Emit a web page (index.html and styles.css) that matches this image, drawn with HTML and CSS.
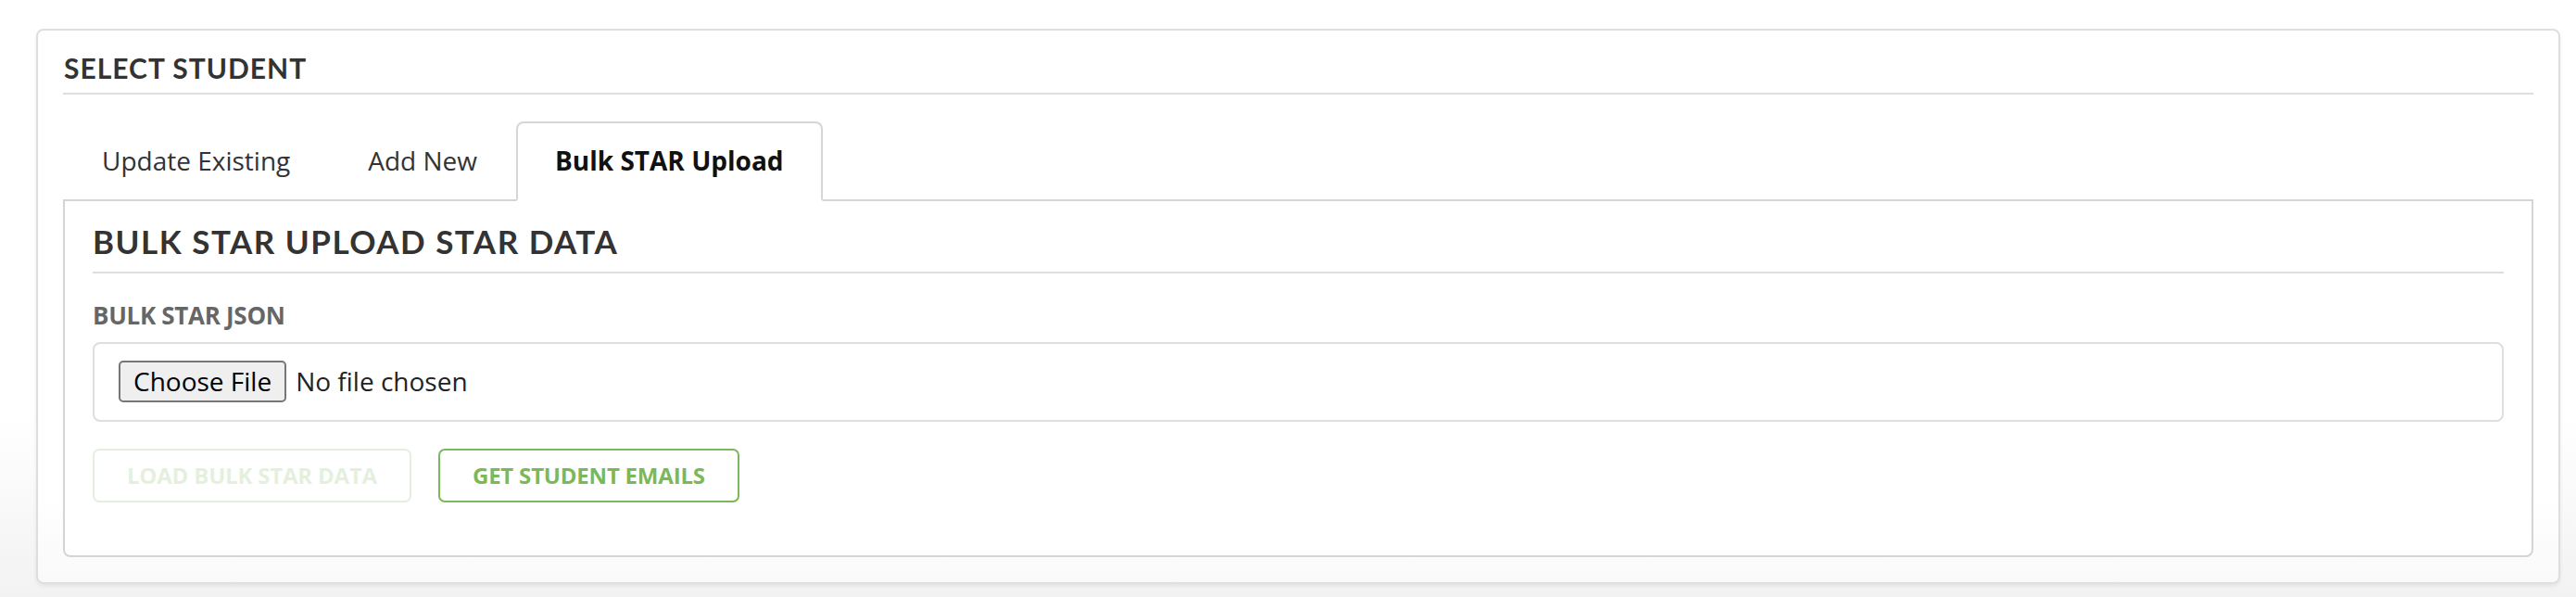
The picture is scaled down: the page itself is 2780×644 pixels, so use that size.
FILE: index.html
```html
<!DOCTYPE html>
<html lang="en">
<head>
<meta charset="utf-8">
<title>Select Student</title>
<link rel="stylesheet" href="styles.css">
</head>
<body>
<section class="card">
  <h2 class="card-title">SELECT STUDENT</h2>
  <nav class="tabs">
    <a class="tab">Update Existing</a>
    <a class="tab">Add New</a>
    <a class="tab tab-active">Bulk STAR Upload</a>
  </nav>
  <div class="panel">
    <h3 class="panel-title">BULK STAR UPLOAD STAR DATA</h3>
    <div class="field-label">BULK STAR JSON</div>
    <div class="file-box">
      <button class="file-btn" type="button">Choose File</button>
      <span class="file-name">No file chosen</span>
    </div>
    <div class="actions">
      <button class="btn btn-disabled" type="button">LOAD BULK STAR DATA</button>
      <button class="btn" type="button">GET STUDENT EMAILS</button>
    </div>
  </div>
</section>
</body>
</html>
```

FILE: styles.css
```css
html, body {
  margin: 0;
  height: 100%;
}
body {
  box-sizing: border-box;
  padding: 31px 17px 0 39px;
  min-height: 644px;
  background: linear-gradient(to bottom, #ffffff 0%, #ffffff 70%, #f2f2f2 100%);
  font-family: "Open Sans", "Liberation Sans", sans-serif;
  color: #333;
}
.card {
  border: 2px solid #dedede;
  border-radius: 8px;
  padding: 20px 27px 27px;
  background: linear-gradient(to bottom, #ffffff 0%, #ffffff 85%, #f9f9f9 100%);
  box-shadow: 0 2px 4px rgba(0, 0, 0, 0.07);
}
.card-title {
  margin: 0;
  font-family: Lato, "Open Sans", sans-serif;
  font-weight: 700;
  font-size: 30px;
  letter-spacing: 1px;
  line-height: 40px;
  color: #333;
  padding: 0 0 7px 1px;
  border-bottom: 2px solid #dedede;
}
.tabs {
  display: flex;
  gap: 0;
  margin-top: 29px;
  margin-bottom: -2px;
  position: relative;
  z-index: 1;
}
.tab {
  display: block;
  padding: 20px 40px 22px;
  border: 2px solid transparent;
  border-radius: 8px 8px 0 0;
  font-size: 28px;
  line-height: 40px;
  color: #333;
}
.tab-active {
  background: #fff;
  border-color: #d6d6d6;
  border-bottom-color: #fff;
  font-weight: 700;
  color: #111;
}
.panel {
  border: 2px solid #d4d4d4;
  border-radius: 0 0 8px 8px;
  padding: 21px 30px 57px;
  background: #fff;
}
.panel-title {
  margin: 0;
  font-family: Lato, "Open Sans", sans-serif;
  font-weight: 700;
  font-size: 35px;
  letter-spacing: 1.5px;
  line-height: 44px;
  color: #333;
  padding-bottom: 11px;
  border-bottom: 2px solid #dedede;
}
.field-label {
  margin-top: 27px;
  font-weight: 700;
  font-size: 26px;
  line-height: 36px;
  color: #666;
  letter-spacing: -0.3px;
}
.file-box {
  margin-top: 11px;
  box-sizing: border-box;
  height: 86px;
  display: flex;
  align-items: center;
  gap: 10px;
  padding: 0 26px 2px;
  border: 2px solid #dedede;
  border-radius: 8px;
}
.file-btn {
  box-sizing: border-box;
  height: 45px;
  padding: 0 14px;
  border: 2px solid #767676;
  border-radius: 5px;
  background: #efefef;
  font-family: "Open Sans", "Liberation Sans", sans-serif;
  font-size: 28px;
  line-height: 40px;
  color: #000;
}
.file-name {
  font-size: 28px;
  line-height: 40px;
  color: #222;
}
.actions {
  display: flex;
  gap: 29px;
  margin-top: 29px;
}
.btn {
  box-sizing: border-box;
  height: 58px;
  padding: 0 35px;
  border: 2px solid #7bb85a;
  border-radius: 7px;
  background: #fff;
  font-family: "Open Sans", "Liberation Sans", sans-serif;
  font-weight: 700;
  font-size: 24px;
  line-height: 32px;
  color: #7bb85a;
  letter-spacing: -0.2px;
}
.btn-disabled {
  opacity: 0.2;
}
```
